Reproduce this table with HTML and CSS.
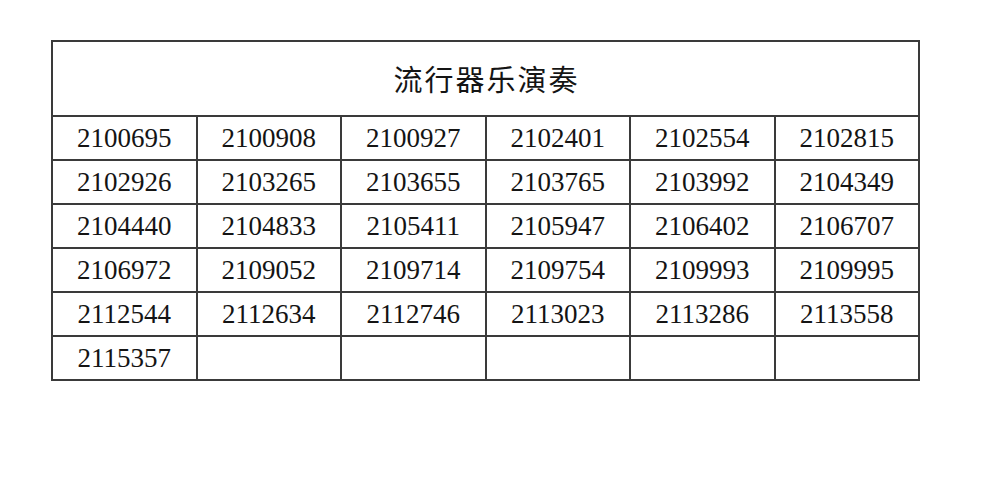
FILE: index.html
```html
<!DOCTYPE html>
<html lang="zh">
<head>
<meta charset="utf-8">
<link rel="stylesheet" href="styles.css">
</head>
<body>
<table class="grid">
  <colgroup><col><col><col><col><col><col></colgroup>
  <tr class="head"><td colspan="6">流行器乐演奏</td></tr>
  <tr><td>2100695</td><td>2100908</td><td>2100927</td><td>2102401</td><td>2102554</td><td>2102815</td></tr>
  <tr><td>2102926</td><td>2103265</td><td>2103655</td><td>2103765</td><td>2103992</td><td>2104349</td></tr>
  <tr><td>2104440</td><td>2104833</td><td>2105411</td><td>2105947</td><td>2106402</td><td>2106707</td></tr>
  <tr><td>2106972</td><td>2109052</td><td>2109714</td><td>2109754</td><td>2109993</td><td>2109995</td></tr>
  <tr><td>2112544</td><td>2112634</td><td>2112746</td><td>2113023</td><td>2113286</td><td>2113558</td></tr>
  <tr><td>2115357</td><td></td><td></td><td></td><td></td><td></td></tr>
</table>
</body>
</html>
```
FILE: styles.css
```css
html, body {
  margin: 0;
  padding: 0;
  background: #ffffff;
}
body {
  padding: 40px 0 0 51px;
}
.grid {
  border-collapse: collapse;
  table-layout: fixed;
  width: 869px;
  font-family: "Liberation Serif", "Times New Roman", serif;
  font-size: 27px;
  color: #141414;
}
.grid td {
  border: 2px solid #3a3a3a;
  height: 44px;
  padding: 0;
  text-align: center;
  vertical-align: middle;
  line-height: 1;
  box-sizing: border-box;
}
.grid .head td {
  height: 75px;
  font-family: "Noto Sans CJK SC", "Noto Sans", sans-serif;
  font-size: 29px;
  letter-spacing: 2px;
  padding-left: 2px;
}
```
